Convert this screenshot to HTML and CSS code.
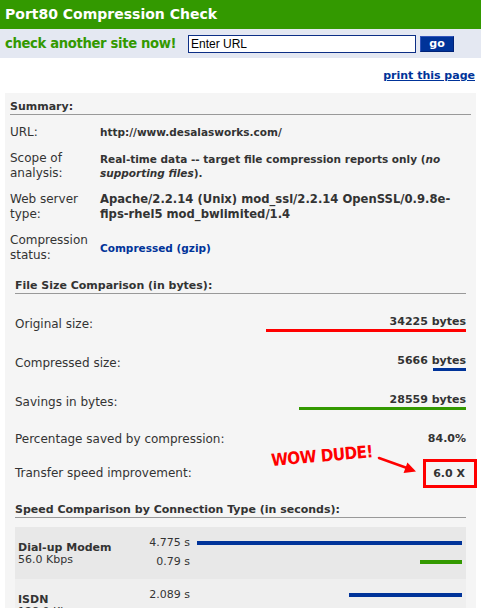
FILE: index.html
```html
<!DOCTYPE html>
<html>
<head>
<meta charset="utf-8">
<title>Port80 Compression Check</title>
<link rel="stylesheet" href="styles.css">
</head>
<body>
<div class="topbar">Port80 Compression Check</div>
<form class="searchbar">
  <span class="again">check another site now!</span>
  <input class="url-input" type="text" value="Enter URL">
  <button class="go" type="button">go</button>
</form>
<div class="printrow"><a href="#" class="printlink">print this page</a></div>

<div class="panel">
  <h2 class="sum-head">Summary:</h2>
  <div class="sum-grid">
    <div class="lbl">URL:</div>
    <div class="val"><span>http://www.desalasworks.com/</span></div>

    <div class="lbl">Scope of analysis:</div>
    <div class="val"><span>Real-time data -- target file compression reports only (<i>no supporting files</i>).</span></div>

    <div class="lbl">Web server type:</div>
    <div class="val big"><span>Apache/2.2.14 (Unix) mod_ssl/2.2.14 OpenSSL/0.9.8e-fips-rhel5 mod_bwlimited/1.4</span></div>

    <div class="lbl">Compression status:</div>
    <div class="val blue"><span>Compressed (gzip)</span></div>
  </div>

  <div class="section">
    <h2 class="sec-head">File Size Comparison (in bytes):</h2>
    <div class="frows">
      <div class="frow bar-row">
        <span class="flbl">Original size:</span>
        <span class="fval"><span class="num">34225 bytes</span><span class="bar red" style="width:200px"></span></span>
      </div>
      <div class="frow bar-row">
        <span class="flbl">Compressed size:</span>
        <span class="fval"><span class="num">5666 bytes</span><span class="bar blue-bar" style="width:33px"></span></span>
      </div>
      <div class="frow bar-row">
        <span class="flbl">Savings in bytes:</span>
        <span class="fval"><span class="num">28559 bytes</span><span class="bar green" style="width:167px"></span></span>
      </div>
      <div class="frow pct-row">
        <span class="flbl">Percentage saved by compression:</span>
        <span class="num">84.0%</span>
      </div>
      <div class="frow transfer">
        <span class="flbl">Transfer speed improvement:</span>
        <span class="wow">WOW DUDE!</span>
        <svg class="arrow" width="44" height="22" viewBox="0 0 44 22">
          <line x1="2" y1="2" x2="30" y2="12" stroke="#ff0000" stroke-width="2.4" stroke-linecap="round"/>
          <polygon points="39,15.5 26.6,17 30.4,6.4" fill="#ff0000"/>
        </svg>
        <span class="boxed">6.0 X</span>
      </div>
    </div>

    <h2 class="sec-head speed-head">Speed Comparison by Connection Type (in seconds):</h2>
    <div class="speed">
      <div class="srow odd">
        <div class="sname"><b>Dial-up Modem</b><br>56.0 Kbps</div>
        <div class="stimes"><div>4.775 s</div><div>0.79 s</div></div>
        <div class="sbars">
          <div class="sline"><span class="sbar blue-bar" style="width:265px"></span></div>
          <div class="sline"><span class="sbar green" style="width:42px"></span></div>
        </div>
      </div>
      <div class="srow even">
        <div class="sname"><b>ISDN</b><br>128.0 Kbps</div>
        <div class="stimes"><div>2.089 s</div><div>0.346 s</div></div>
        <div class="sbars">
          <div class="sline"><span class="sbar blue-bar" style="width:113px"></span></div>
          <div class="sline"><span class="sbar green" style="width:19px"></span></div>
        </div>
      </div>
    </div>
  </div>
</div>
</body>
</html>
```

FILE: styles.css
```css
html, body {
  margin: 0;
  padding: 0;
  background: #ffffff;
}
body {
  font-family: "DejaVu Sans", Verdana, sans-serif;
  color: #333333;
  font-size: 11px;
}
.topbar {
  height: 29px;
  line-height: 29px;
  background: #339900;
  color: #ffffff;
  font-weight: bold;
  font-size: 14px;
  padding-left: 5px;
}
.searchbar {
  margin: 0;
  height: 29px;
  background: #e4e8f2;
  display: flex;
  align-items: center;
}
.again {
  color: #339900;
  font-weight: bold;
  font-size: 13.2px;
  letter-spacing: -0.35px;
  white-space: nowrap;
  margin-left: 5px;
  width: 183px;
  flex-shrink: 0;
}
.url-input {
  box-sizing: border-box;
  width: 228px;
  height: 18px;
  border: 1px solid #0d2f86;
  padding: 0 2px;
  margin: 0;
  font-family: "Liberation Sans", Arial, sans-serif;
  font-size: 12px;
  color: #000;
  background: #fff;
  flex-shrink: 0;
}
.go {
  box-sizing: border-box;
  margin-left: 4px;
  width: 34px;
  height: 16px;
  padding: 0;
  background: #003399;
  border: 1px solid #3355bb;
  border-right-color: #002277;
  border-bottom-color: #002277;
  color: #fff;
  font-family: "DejaVu Sans", Verdana, sans-serif;
  font-weight: bold;
  font-size: 11px;
  line-height: 12px;
}
.printrow {
  height: 35px;
  display: flex;
  justify-content: flex-end;
  align-items: center;
  padding-right: 6px;
}
.printlink {
  color: #003399;
  font-weight: bold;
  font-size: 11px;
  text-decoration: underline;
}
.panel {
  margin: 0 5px;
  background: #f5f5f5;
  padding: 7px 5px 0;
}
.sum-head, .sec-head {
  margin: 0;
  font-size: 11px;
  font-weight: bold;
  line-height: 13px;
  color: #333333;
  border-bottom: 1px solid #999999;
  padding-bottom: 1px;
}
.sum-grid {
  display: grid;
  grid-template-columns: 90px 1fr;
  margin-top: 5px;
}
.lbl, .val {
  padding: 5px 0 6px;
  line-height: 15px;
}
.lbl {
  font-size: 12px;
  padding-right: 4px;
}
.val {
  font-size: 10.5px;
  font-weight: bold;
  display: flex;
  align-items: center;
  line-height: 14.5px;
}
.val.big {
  font-size: 11.6px;
  line-height: 15px;
}
.val.blue {
  color: #003399;
}
.section {
  padding: 0 5px;
  margin-top: 10px;
}
.frows {
  margin-top: 10px;
}
.frow {
  display: flex;
  justify-content: space-between;
  align-items: center;
  font-size: 11px;
}
.bar-row {
  height: 39px;
}
.pct-row {
  height: 35px;
}
.transfer {
  height: 34px;
  position: relative;
}
.flbl {
  font-size: 12px;
  line-height: 14px;
}
.fval {
  display: flex;
  flex-direction: column;
  align-items: flex-end;
}
.num {
  font-weight: bold;
  font-size: 11px;
  line-height: 14px;
}
.bar {
  display: block;
  height: 3px;
}
.red { background: #ff0000; }
.blue-bar { background: #003399; }
.green { background: #339900; }
.wow {
  position: absolute;
  left: 257px;
  top: -6px;
  line-height: 20px;
  color: #ff0000;
  font-family: "DejaVu Sans Condensed", "DejaVu Sans", sans-serif;
  font-stretch: condensed;
  font-weight: bold;
  font-size: 17px;
  letter-spacing: -0.6px;
  transform: rotate(-5deg);
  transform-origin: left bottom;
  white-space: nowrap;
}
.arrow {
  position: absolute;
  left: 362px;
  top: 0;
}
.boxed {
  font-weight: bold;
  font-size: 11px;
  line-height: 14px;
  border: 3px solid #ff0000;
  padding: 5px 9px 4px 7px;
  margin-right: -11px;
}
.speed-head {
  margin-top: 13px;
}
.speed {
  margin-top: 9px;
}
.srow {
  display: grid;
  grid-template-columns: 120px 45px 265px;
  column-gap: 7px;
  align-items: center;
  padding: 6px 3px 8px 3px;
}
.odd { background: #e8e8e8; }
.even { background: #efefef; }
.sname {
  font-size: 11px;
  line-height: 12px;
  padding-top: 4px;
  white-space: nowrap;
}
.stimes div {
  text-align: right;
  line-height: 19px;
  font-size: 11px;
  white-space: nowrap;
}
.sline {
  height: 19px;
  display: flex;
  justify-content: flex-end;
  align-items: center;
}
.sbar {
  display: block;
  height: 4px;
}
```
